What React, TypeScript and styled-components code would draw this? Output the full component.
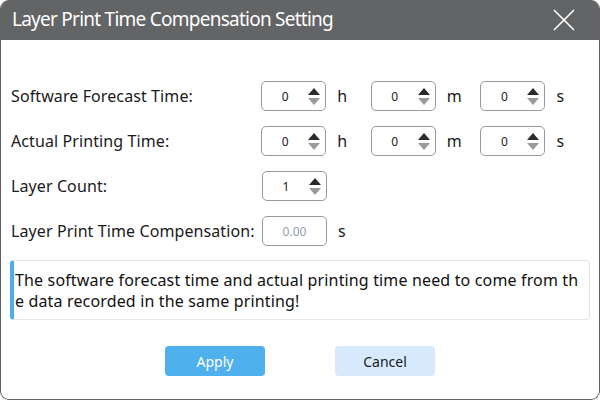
import React from 'react';
import styled, { createGlobalStyle } from 'styled-components';

const GlobalStyle = createGlobalStyle`
  html, body {
    margin: 0;
    padding: 0;
    background: #ffffff;
  }
  body {
    font-family: "Noto Sans", "Open Sans", sans-serif;
  }
`;

const Window = styled.div`
  width: 600px;
  height: 400px;
  box-sizing: border-box;
  border: 1.5px solid #626262;
  border-top: none;
  border-radius: 9px;
  overflow: hidden;
  display: flex;
  flex-direction: column;
  background: #ffffff;
`;

const TitleBar = styled.div`
  height: 40px;
  flex-shrink: 0;
  background: #636466;
  display: flex;
  align-items: center;
  justify-content: space-between;
  padding: 0 23px 0 11px;
`;

const Title = styled.div`
  color: #ffffff;
  font-size: 19px;
  letter-spacing: -0.75px;
  margin-top: -2px;
`;

const CloseButton = styled.button`
  background: none;
  border: none;
  padding: 0;
  width: 24px;
  height: 24px;
  display: flex;
  align-items: center;
  justify-content: center;
`;

const Body = styled.div`
  flex: 1;
  display: flex;
  flex-direction: column;
  padding: 41px 9px 0 9px;
`;

const Row = styled.div`
  display: flex;
  align-items: center;
  height: 30px;
  margin-bottom: 15px;
`;

const Label = styled.div`
  width: 251px;
  padding-left: 1px;
  font-size: 16px;
  letter-spacing: 0.1px;
  color: #1a1a1a;
  white-space: nowrap;
`;

const Field = styled.div`
  display: flex;
  align-items: center;
  width: 110px;
`;

const Box = styled.div`
  width: 65px;
  height: 30px;
  box-sizing: border-box;
  border: 1px solid #9a9a9a;
  border-radius: 5px;
  display: flex;
  align-items: center;
  background: #fff;
`;

const Value = styled.div<{ $muted?: boolean }>`
  flex: 1;
  text-align: center;
  font-size: 12px;
  color: ${p => (p.$muted ? '#8da0b8' : '#1a1a1a')};
  padding-left: ${p => (p.$muted ? '0' : '2px')};
`;

const Arrows = styled.div`
  width: 16px;
  margin-right: 3px;
  display: flex;
  flex-direction: column;
  align-items: center;
  gap: 3px;
`;

const Unit = styled.div`
  margin-left: 11px;
  font-size: 16px;
  color: #1a1a1a;
`;

const Notice = styled.div`
  height: 60px;
  margin-top: -1px;
  box-sizing: border-box;
  border: 1px solid #e6e6e6;
  border-left: 4px solid #4aaef0;
  border-radius: 4px;
  padding: 9px 5px 0 1px;
  font-size: 16px;
  letter-spacing: 0.15px;
  line-height: 21px;
  color: #111;
  word-break: break-all;
`;

const Buttons = styled.div`
  display: flex;
  justify-content: center;
  gap: 70px;
  margin-top: 26px;
`;

const Button = styled.button<{ $primary?: boolean }>`
  width: 100px;
  height: 30px;
  border: none;
  border-radius: 4px;
  font-family: "Noto Sans", "Open Sans", sans-serif;
  font-size: 14px;
  background: ${p => (p.$primary ? '#4fb0ee' : '#d6e9fd')};
  color: ${p => (p.$primary ? '#ffffff' : '#1a1a1a')};
`;

const SpinArrows = () => (
  <Arrows>
    <svg width="12" height="7" viewBox="0 0 12 7">
      <polygon points="6,0 12,7 0,7" fill="#2b2b2b" />
    </svg>
    <svg width="12" height="7" viewBox="0 0 12 7">
      <polygon points="0,0 12,0 6,7" fill="#9a9a9a" />
    </svg>
  </Arrows>
);

const Spin: React.FC<{ value: string; unit?: string }> = ({ value, unit }) => (
  <Field>
    <Box>
      <Value>{value}</Value>
      <SpinArrows />
    </Box>
    {unit && <Unit>{unit}</Unit>}
  </Field>
);

const App: React.FC = () => {
  return (
    <>
      <GlobalStyle />
      <Window>
        <TitleBar>
          <Title>Layer Print Time Compensation Setting</Title>
          <CloseButton>
            <svg width="24" height="24" viewBox="0 0 24 24">
              <path d="M2 2 L22 22 M22 2 L2 22" stroke="#ffffff" strokeWidth="1.6" />
            </svg>
          </CloseButton>
        </TitleBar>
        <Body>
          <Row>
            <Label>Software Forecast Time:</Label>
            <Spin value="0" unit="h" />
            <Spin value="0" unit="m" />
            <Spin value="0" unit="s" />
          </Row>
          <Row>
            <Label>Actual Printing Time:</Label>
            <Spin value="0" unit="h" />
            <Spin value="0" unit="m" />
            <Spin value="0" unit="s" />
          </Row>
          <Row>
            <Label>Layer Count:</Label>
            <Spin value="1" />
          </Row>
          <Row>
            <Label>Layer Print Time Compensation:</Label>
            <Field>
              <Box>
                <Value $muted>0.00</Value>
              </Box>
              <Unit>s</Unit>
            </Field>
          </Row>
          <Notice>
            The software forecast time and actual printing time need to come from the data recorded in the same printing!
          </Notice>
          <Buttons>
            <Button $primary>Apply</Button>
            <Button>Cancel</Button>
          </Buttons>
        </Body>
      </Window>
    </>
  );
};

export default App;
